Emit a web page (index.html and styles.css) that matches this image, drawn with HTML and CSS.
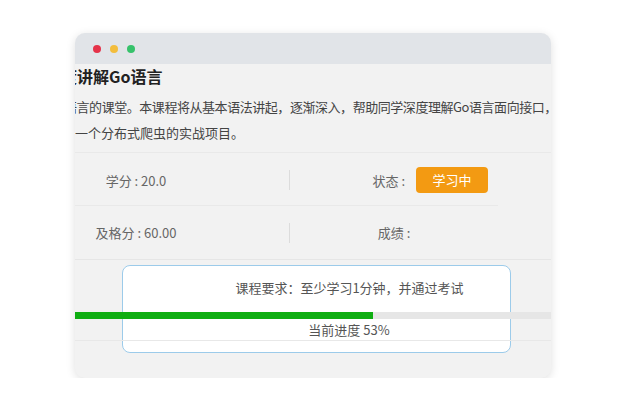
FILE: index.html
```html
<!DOCTYPE html>
<html lang="zh-CN">
<head>
    <meta charset="UTF-8">
    <meta name="viewport" content="width=device-width, initial-scale=1.0">
    <title>课程详情</title>
    <link rel="stylesheet" href="styles.css">
</head>
<body>
    <div class="window">
        <div class="titlebar">
            <span class="dot dot-red"></span>
            <span class="dot dot-yellow"></span>
            <span class="dot dot-green"></span>
        </div>

        <!-- 课程简介 -->
        <div class="intro">
            <h2 class="course-title">度讲解Go语言</h2>
            <p class="desc-line first">语言的课堂。本课程将从基本语法讲起，逐渐深入，帮助同学深度理解Go语言面向接口，</p>
            <p class="desc-line">一个分布式爬虫的实战项目。</p>
        </div>

        <!-- 学分 / 状态 -->
        <div class="info">
            <div class="info-row top">
                <div class="cell">学分 : 20.0</div>
                <span class="sep"></span>
                <div class="cell cell-status">状态 : <span class="badge">学习中</span></div>
            </div>
            <div class="info-row">
                <div class="cell">及格分 : 60.00</div>
                <span class="sep"></span>
                <div class="cell cell-score">成绩 :</div>
            </div>
        </div>

        <!-- 进度 -->
        <div class="progress">
            <div class="track">
                <div class="fill" style="width: 62.6%;"></div>
            </div>
            <p class="progress-text">当前进度 53%</p>
        </div>

        <div class="popup">
            <p>课程要求：至少学习1分钟，并通过考试</p>
        </div>
    </div>
</body>
</html>
```

FILE: styles.css
```css
* {
    margin: 0;
    padding: 0;
    box-sizing: border-box;
    font-family: "Noto Sans CJK SC", "Noto Sans", sans-serif;
}

body {
    background-color: #fff;
    color: #333;
}

.window {
    position: relative;
    margin: 33px 0 0 75px;
    width: 476px;
    height: 345px;
    background: #f2f2f2;
    border-radius: 10px;
    overflow: hidden;
    box-shadow: 0 2px 10px rgba(0,0,0,0.13);
}

.titlebar {
    height: 31px;
    background: #e1e4e8;
    display: flex;
    align-items: center;
    gap: 9px;
    padding-left: 18px;
}

.dot {
    width: 8px;
    height: 8px;
    border-radius: 50%;
}

.dot-red { background: #e5334a; }
.dot-yellow { background: #f3bd3c; }
.dot-green { background: #36c26b; }

.intro {
    white-space: nowrap;
}

.course-title {
    margin-left: -14px;
    font-size: 16px;
    font-weight: bold;
    line-height: 24px;
    color: #222;
    margin-bottom: 6px;
}

.desc-line {
    font-size: 13px;
    line-height: 26px;
    color: #444;
}

.desc-line.first {
    margin-left: -11px;
    letter-spacing: -0.45px;
}

.info {
    margin-top: 6px;
    border-top: 1px solid #e9e9e9;
    border-bottom: 1px solid #e6e6e6;
}

.info-row {
    margin-left: -92px;
    width: 515px;
    height: 53px;
    display: grid;
    grid-template-columns: 306px 1px 208px;
    align-items: center;
    font-size: 13px;
    color: #666;
}

.info-row.top {
    border-bottom: 1px solid #e9e9e9;
    padding-top: 2px;
}

.cell {
    display: flex;
    align-items: center;
    justify-content: center;
}

.sep {
    height: 20px;
    background: #dcdcdc;
}

.cell-status {
    justify-content: flex-end;
    padding-right: 10px;
}

.badge {
    margin-left: 11px;
    width: 72px;
    height: 26px;
    line-height: 26px;
    text-align: center;
    background: #f39a12;
    color: #fff;
    font-size: 13px;
    border-radius: 4px;
}

.progress {
    position: relative;
    z-index: 2;
    margin-top: 52px;
    border-bottom: 1px solid #e8e8e8;
}

.track {
    height: 7px;
    background: #e6e6e6;
}

.fill {
    height: 100%;
    background: #0fae12;
}

.progress-text {
    padding-left: 72px;
    text-align: center;
    font-size: 13px;
    line-height: 21px;
    color: #555;
}

.popup {
    position: absolute;
    z-index: 1;
    left: 47px;
    top: 232px;
    width: 389px;
    height: 88px;
    background: #fff;
    border: 1px solid #9ccbea;
    border-radius: 8px;
    padding: 12px 0 0 66px;
    text-align: center;
    font-size: 13px;
    line-height: 20px;
    color: #555;
}
```
